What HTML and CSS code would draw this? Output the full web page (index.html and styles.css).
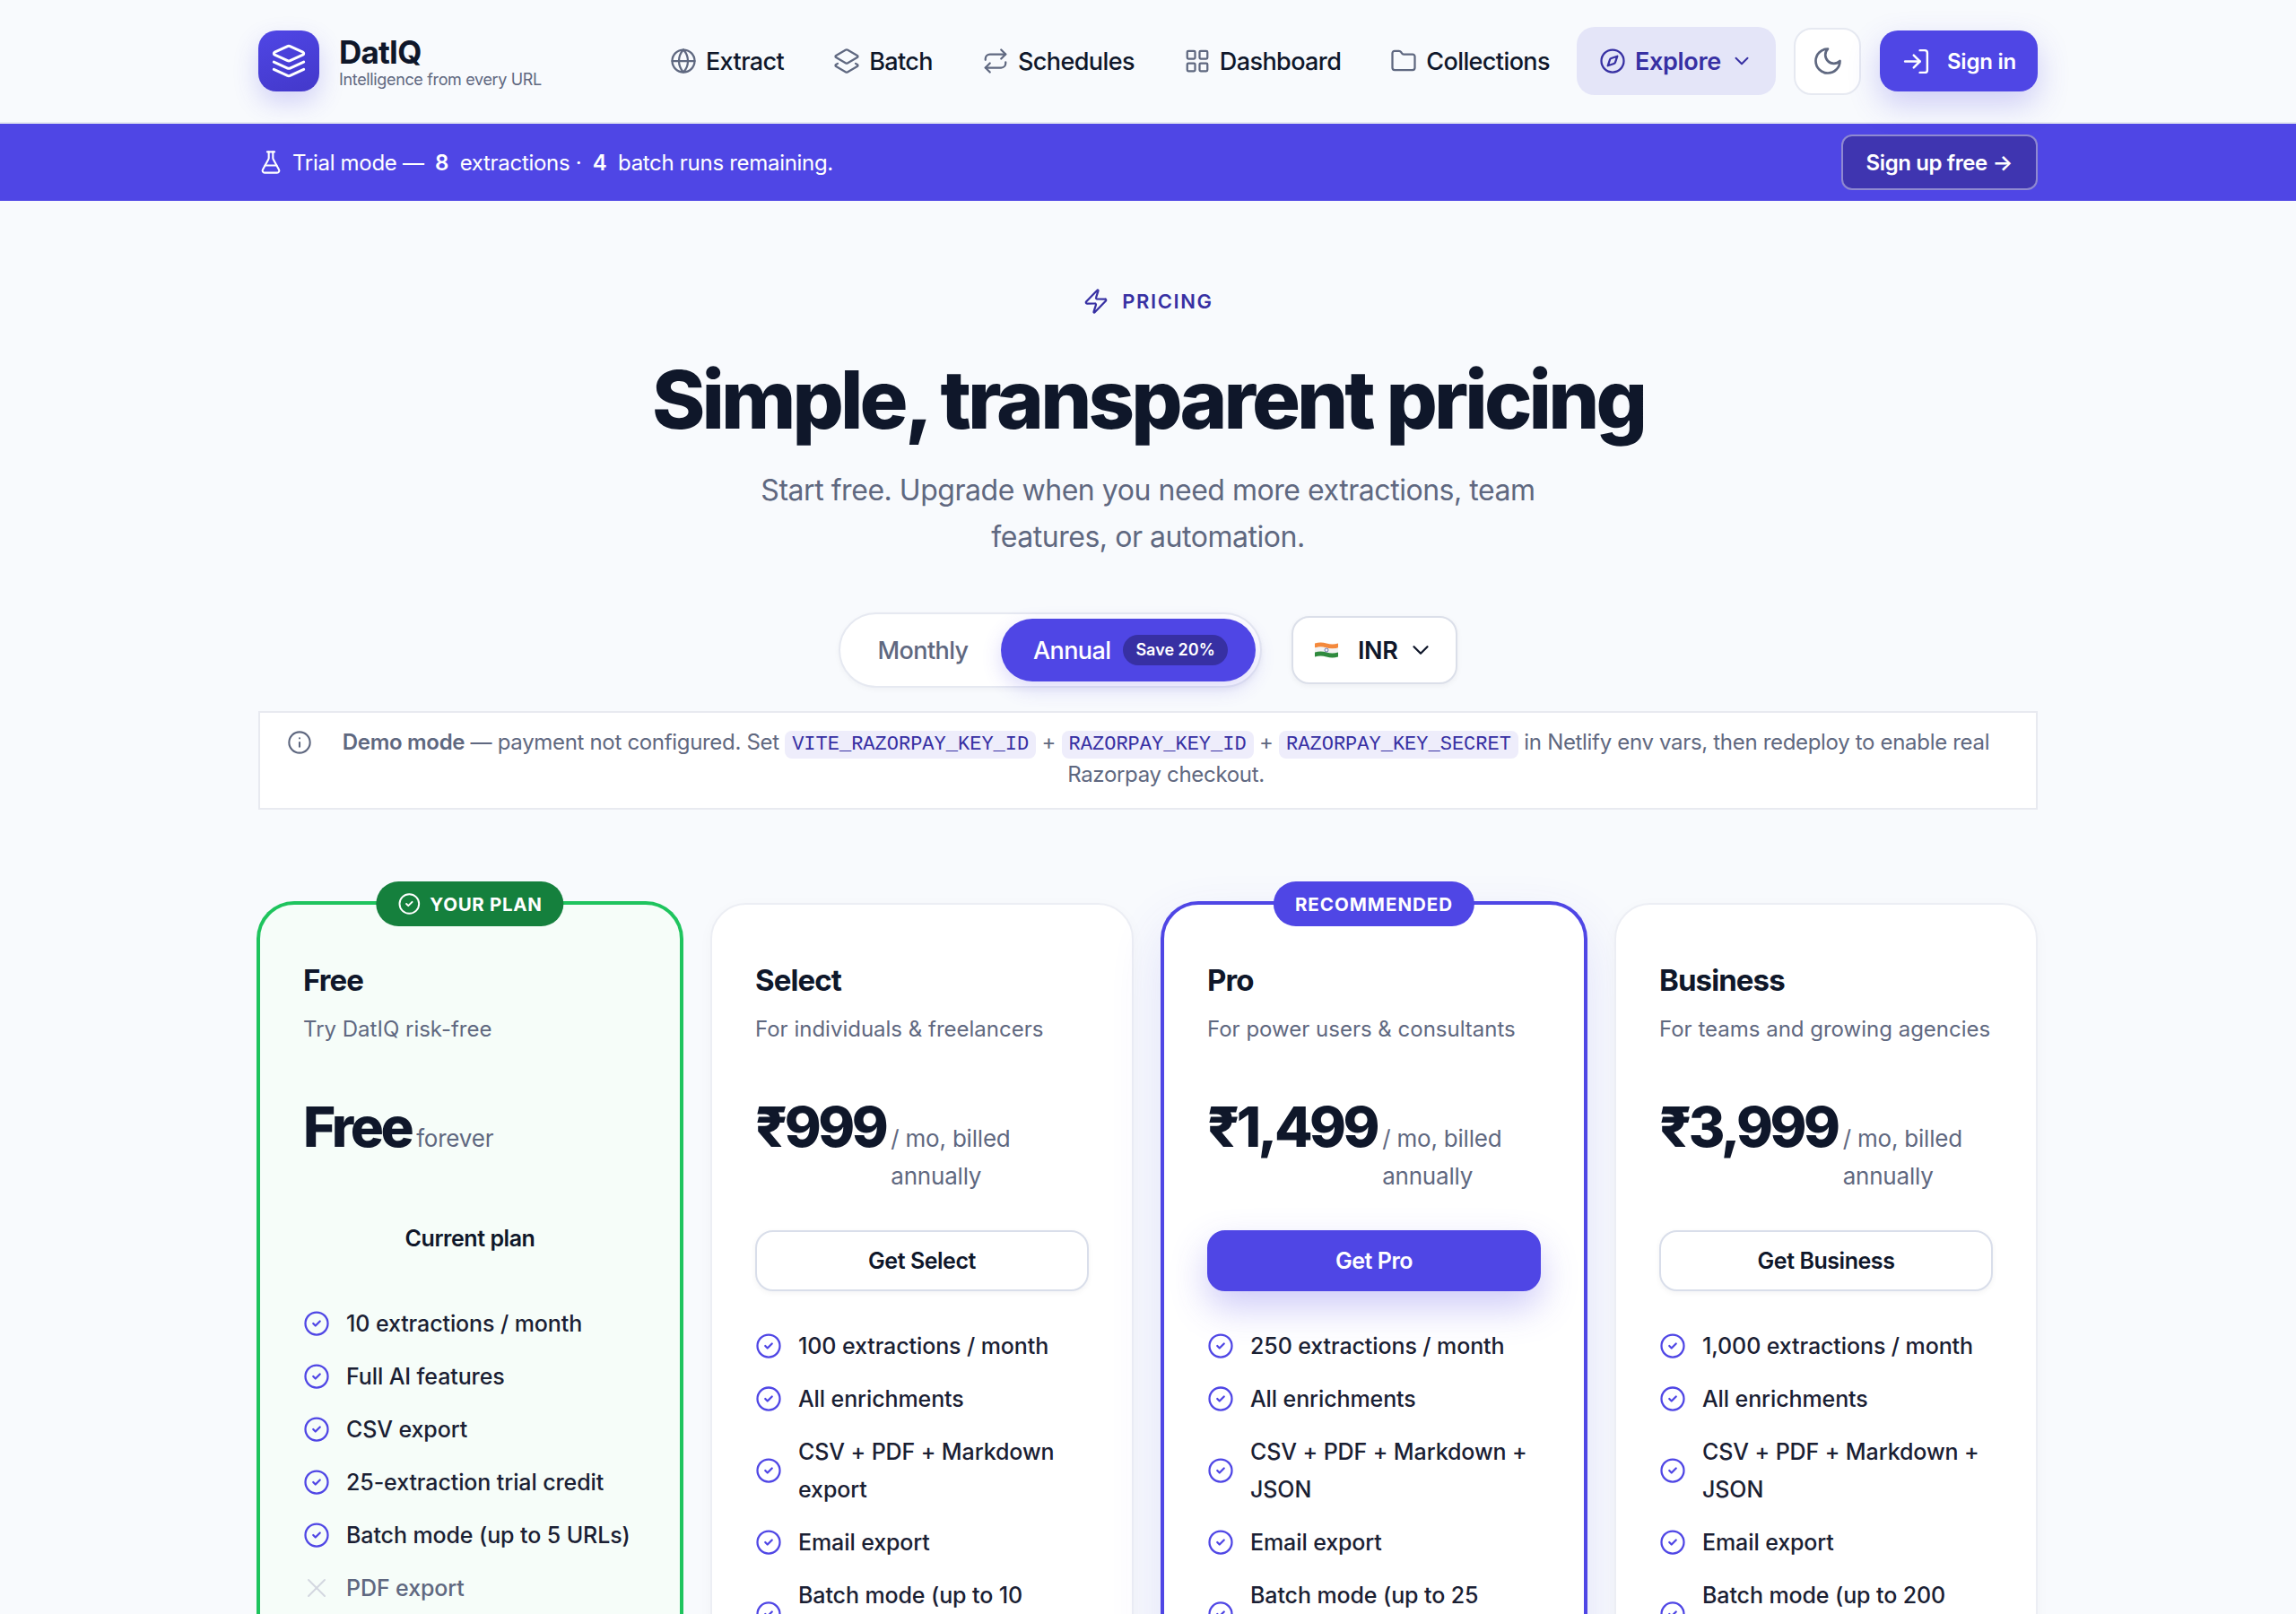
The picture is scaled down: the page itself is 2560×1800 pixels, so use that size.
FILE: index.html
```html
<!DOCTYPE html>
<html>
	<head>
		<meta charset="utf-8">
		<title>DatIQ - Pricing</title>
		<link rel="stylesheet" href="styles.css">
	</head>
	<body>
		<svg class="sprite">
			<symbol id="i-globe" viewBox="0 0 24 24"><circle cx="12" cy="12" r="10"/><path d="M12 2a14.5 14.5 0 0 0 0 20 14.5 14.5 0 0 0 0-20"/><path d="M2 12h20"/></symbol>
			<symbol id="i-layers" viewBox="0 0 24 24"><path d="M13 13.74a2 2 0 0 1-2 0L2.5 8.87a1 1 0 0 1 0-1.74L11 2.26a2 2 0 0 1 2 0l8.5 4.87a1 1 0 0 1 0 1.74z"/><path d="m20 14.285 1.5.845a1 1 0 0 1 0 1.74L13 21.74a2 2 0 0 1-2 0l-8.5-4.87a1 1 0 0 1 0-1.74l1.5-.845"/></symbol>
			<symbol id="i-repeat" viewBox="0 0 24 24"><path d="m17 2 4 4-4 4"/><path d="M3 11v-1a4 4 0 0 1 4-4h14"/><path d="m7 22-4-4 4-4"/><path d="M21 13v1a4 4 0 0 1-4 4H3"/></symbol>
			<symbol id="i-grid" viewBox="0 0 24 24"><rect x="3" y="3" width="7" height="7" rx="1"/><rect x="14" y="3" width="7" height="7" rx="1"/><rect x="14" y="14" width="7" height="7" rx="1"/><rect x="3" y="14" width="7" height="7" rx="1"/></symbol>
			<symbol id="i-folder" viewBox="0 0 24 24"><path d="M20 20a2 2 0 0 0 2-2V8a2 2 0 0 0-2-2h-7.9a2 2 0 0 1-1.69-.9L9.6 3.9A2 2 0 0 0 7.93 3H4a2 2 0 0 0-2 2v13a2 2 0 0 0 2 2Z"/></symbol>
			<symbol id="i-compass" viewBox="0 0 24 24"><circle cx="12" cy="12" r="10"/><path d="m16.24 7.76-1.804 5.411a2 2 0 0 1-1.265 1.265L7.76 16.24l1.804-5.411a2 2 0 0 1 1.265-1.265z"/></symbol>
			<symbol id="i-chevron" viewBox="0 0 24 24"><path d="m6 9 6 6 6-6"/></symbol>
			<symbol id="i-moon" viewBox="0 0 24 24"><path d="M12 3a6 6 0 0 0 9 9 9 9 0 1 1-9-9Z"/></symbol>
			<symbol id="i-login" viewBox="0 0 24 24"><path d="M15 3h4a2 2 0 0 1 2 2v14a2 2 0 0 1-2 2h-4"/><path d="m10 17 5-5-5-5"/><path d="M15 12H3"/></symbol>
			<symbol id="i-flask" viewBox="0 0 24 24"><path d="M14 2v6a2 2 0 0 0 .245.96l5.51 10.08A2 2 0 0 1 18 22H6a2 2 0 0 1-1.755-2.96l5.51-10.08A2 2 0 0 0 10 8V2"/><path d="M6.453 15h11.094"/><path d="M8.5 2h7"/></symbol>
			<symbol id="i-zap" viewBox="0 0 24 24"><path d="M4 14a1 1 0 0 1-.78-1.63l9.9-10.2a.5.5 0 0 1 .86.46l-1.92 6.02A1 1 0 0 0 13 10h7a1 1 0 0 1 .78 1.63l-9.9 10.2a.5.5 0 0 1-.86-.46l1.92-6.02A1 1 0 0 0 11 14z"/></symbol>
			<symbol id="i-info" viewBox="0 0 24 24"><circle cx="12" cy="12" r="10"/><path d="M12 16v-4"/><path d="M12 8h.01"/></symbol>
			<symbol id="i-check" viewBox="0 0 24 24"><circle cx="12" cy="12" r="10"/><path d="m9 12 2 2 4-4"/></symbol>
			<symbol id="i-x" viewBox="0 0 24 24"><path d="M18 6 6 18"/><path d="m6 6 12 12"/></symbol>
			<symbol id="i-stack" viewBox="0 0 24 24"><path d="M12.83 2.18a2 2 0 0 0-1.66 0L2.6 6.08a1 1 0 0 0 0 1.83l8.58 3.91a2 2 0 0 0 1.66 0l8.58-3.9a1 1 0 0 0 0-1.83Z"/><path d="m22 17.65-9.17 4.16a2 2 0 0 1-1.66 0L2 17.65"/><path d="m22 12.65-9.17 4.16a2 2 0 0 1-1.66 0L2 12.65"/></symbol>
		</svg>

		<header class="topbar">
			<div class="wrap topbar-in">
				<a class="brand" href="#">
					<span class="brand-logo"><svg class="ic"><use href="#i-stack"/></svg></span>
					<span class="brand-text">
						<span class="brand-name">DatIQ</span>
						<span class="brand-sub">Intelligence from every URL</span>
					</span>
				</a>
				<nav class="nav">
					<a class="nav-link" href="#"><svg class="ic"><use href="#i-globe"/></svg>Extract</a>
					<a class="nav-link" href="#"><svg class="ic"><use href="#i-layers"/></svg>Batch</a>
					<a class="nav-link" href="#"><svg class="ic"><use href="#i-repeat"/></svg>Schedules</a>
					<a class="nav-link" href="#"><svg class="ic"><use href="#i-grid"/></svg>Dashboard</a>
					<a class="nav-link" href="#"><svg class="ic"><use href="#i-folder"/></svg>Collections</a>
					<a class="nav-explore" href="#"><svg class="ic"><use href="#i-compass"/></svg>Explore<svg class="ic ic-small"><use href="#i-chevron"/></svg></a>
				</nav>
				<a class="theme-btn" href="#"><svg class="ic"><use href="#i-moon"/></svg></a>
				<a class="signin-btn" href="#"><svg class="ic"><use href="#i-login"/></svg>Sign in</a>
			</div>
		</header>

		<div class="trial">
			<div class="wrap trial-in">
				<svg class="ic"><use href="#i-flask"/></svg>
				<span class="trial-text">Trial mode — <b>8</b> extractions · <b>4</b> batch runs remaining.</span>
				<a class="trial-btn" href="#">Sign up free →</a>
			</div>
		</div>

		<main class="wrap">
			<section class="hero">
				<div class="eyebrow"><svg class="ic"><use href="#i-zap"/></svg>PRICING</div>
				<h1>Simple, transparent pricing</h1>
				<p class="lead">Start free. Upgrade when you need more extractions, team features, or automation.</p>
				<div class="controls">
					<div class="toggle">
						<span class="toggle-opt">Monthly</span>
						<span class="toggle-opt active">Annual<span class="save">Save 20%</span></span>
					</div>
					<div class="currency">
						<svg class="flag" viewBox="0 0 26 18">
							<path d="M0 1.5q6.5-2 13 0t13 0v5q-6.500 2-13 0t-13 0z" fill="#f4893c"/>
							<path d="M0 6.500q6.500-2 13 0t13 0v5q-6.500 2-13 0t-13 0z" fill="#f3f3f3"/>
							<path d="M0 11.500q6.500-2 13 0t13 0v5q-6.500 2-13 0t-13 0z" fill="#2f8a3e"/>
							<circle cx="13" cy="9" r="2" fill="none" stroke="#3b4a9a" stroke-width=".7"/>
						</svg>
						<span>INR</span>
						<svg class="ic ic-small"><use href="#i-chevron"/></svg>
					</div>
				</div>
			</section>

			<div class="demo">
				<svg class="ic"><use href="#i-info"/></svg>
				<p><b>Demo mode</b> — payment not configured. Set <code>VITE_RAZORPAY_KEY_ID</code> + <code>RAZORPAY_KEY_ID</code> + <code>RAZORPAY_KEY_SECRET</code> in Netlify env vars, then redeploy to enable real Razorpay checkout.</p>
			</div>

			<section class="plans">
				<article class="plan plan-current">
					<span class="ribbon ribbon-green"><svg class="ic"><use href="#i-check"/></svg>YOUR PLAN</span>
					<h3>Free</h3>
					<p class="plan-desc">Try DatIQ risk-free</p>
					<div class="price"><strong>Free</strong><span>forever</span></div>
					<div class="plan-btn plan-btn-plain">Current plan</div>
					<ul class="feats">
						<li><svg class="ic"><use href="#i-check"/></svg>10 extractions / month</li>
						<li><svg class="ic"><use href="#i-check"/></svg>Full AI features</li>
						<li><svg class="ic"><use href="#i-check"/></svg>CSV export</li>
						<li><svg class="ic"><use href="#i-check"/></svg>25-extraction trial credit</li>
						<li><svg class="ic"><use href="#i-check"/></svg>Batch mode (up to 5 URLs)</li>
						<li class="off"><svg class="ic"><use href="#i-x"/></svg>PDF export</li>
					</ul>
				</article>

				<article class="plan">
					<h3>Select</h3>
					<p class="plan-desc">For individuals &amp; freelancers</p>
					<div class="price"><strong>₹999</strong><span>/ mo, billed annually</span></div>
					<a class="plan-btn" href="#">Get Select</a>
					<ul class="feats">
						<li><svg class="ic"><use href="#i-check"/></svg>100 extractions / month</li>
						<li><svg class="ic"><use href="#i-check"/></svg>All enrichments</li>
						<li><svg class="ic"><use href="#i-check"/></svg>CSV + PDF + Markdown export</li>
						<li><svg class="ic"><use href="#i-check"/></svg>Email export</li>
						<li><svg class="ic"><use href="#i-check"/></svg>Batch mode (up to 10 URLs)</li>
					</ul>
				</article>

				<article class="plan plan-best">
					<span class="ribbon">RECOMMENDED</span>
					<h3>Pro</h3>
					<p class="plan-desc">For power users &amp; consultants</p>
					<div class="price"><strong>₹1,499</strong><span>/ mo, billed annually</span></div>
					<a class="plan-btn plan-btn-primary" href="#">Get Pro</a>
					<ul class="feats">
						<li><svg class="ic"><use href="#i-check"/></svg>250 extractions / month</li>
						<li><svg class="ic"><use href="#i-check"/></svg>All enrichments</li>
						<li><svg class="ic"><use href="#i-check"/></svg>CSV + PDF + Markdown + JSON</li>
						<li><svg class="ic"><use href="#i-check"/></svg>Email export</li>
						<li><svg class="ic"><use href="#i-check"/></svg>Batch mode (up to 25 URLs)</li>
					</ul>
				</article>

				<article class="plan">
					<h3>Business</h3>
					<p class="plan-desc">For teams and growing agencies</p>
					<div class="price"><strong>₹3,999</strong><span>/ mo, billed annually</span></div>
					<a class="plan-btn" href="#">Get Business</a>
					<ul class="feats">
						<li><svg class="ic"><use href="#i-check"/></svg>1,000 extractions / month</li>
						<li><svg class="ic"><use href="#i-check"/></svg>All enrichments</li>
						<li><svg class="ic"><use href="#i-check"/></svg>CSV + PDF + Markdown + JSON</li>
						<li><svg class="ic"><use href="#i-check"/></svg>Email export</li>
						<li><svg class="ic"><use href="#i-check"/></svg>Batch mode (up to 200 URLs)</li>
					</ul>
				</article>
			</section>
		</main>
	</body>
</html>
```

FILE: styles.css
```css
*{margin:0;padding:0;box-sizing:border-box;}
html,body{height:100vh;overflow:hidden;}
body{background:#f8fafd;color:#0f172a;font-family:"Inter","Liberation Sans",sans-serif;}
a{text-decoration:none;color:inherit;}
ul{list-style:none;}

.sprite{display:none;}
.ic{width:30px;height:30px;fill:none;stroke:currentColor;stroke-width:1.8;stroke-linecap:round;stroke-linejoin:round;flex:none;}
.ic-small{width:26px;height:26px;}
.wrap{width:1984px;margin:0 auto;}

/* header */
.topbar{height:138px;border-bottom:2px solid #e6e9f1;}
.topbar-in{height:136px;display:flex;align-items:center;}
.brand{display:flex;align-items:center;gap:22px;}
.brand-logo{width:68px;height:68px;border-radius:20px;background:linear-gradient(160deg,#4f46e5,#4338ca);color:#fff;display:flex;align-items:center;justify-content:center;box-shadow:0 12px 28px rgba(79,70,229,.22);}
.brand-logo .ic{width:40px;height:40px;}
.brand-text{display:flex;flex-direction:column;padding-top:4px;}
.brand-name{font-size:35px;line-height:38px;font-weight:700;letter-spacing:-.8px;}
.brand-sub{font-size:18px;line-height:24px;letter-spacing:-.35px;color:#5f6880;}
.nav{margin-left:auto;display:flex;align-items:center;gap:5px;}
.nav-link{display:flex;align-items:center;gap:10px;padding:0 25px;height:76px;font-size:27px;font-weight:500;letter-spacing:-.6px;color:#0f172a;}
.nav-link .ic{color:#5f6880;}
.nav-explore{display:flex;align-items:center;gap:10px;height:76px;padding:0 25px;border-radius:20px;background:#e4e5f8;color:#3730a3;font-size:27px;font-weight:600;letter-spacing:-.3px;}
.theme-btn{margin-left:20px;width:75px;height:75px;border-radius:20px;background:#fff;border:2px solid #e6e9f1;display:flex;align-items:center;justify-content:center;color:#5f6880;}
.theme-btn .ic{width:36px;height:36px;}
.signin-btn{margin-left:21px;width:176px;height:68px;border-radius:20px;background:#4f46e5;color:#fff;display:flex;align-items:center;justify-content:center;gap:18px;font-size:24px;font-weight:600;letter-spacing:-.2px;box-shadow:0 14px 34px rgba(79,70,229,.25);}
.signin-btn .ic{width:33px;height:33px;}

/* trial banner */
.trial{height:86px;background:#4f46e5;color:#fff;}
.trial-in{height:86px;display:flex;align-items:center;gap:10px;}
.trial-in .ic{width:28px;height:28px;}
.trial-text{font-size:24px;letter-spacing:-.3px;}
.trial-text b{font-weight:600;margin:0 6px;}
.trial-btn{margin-left:auto;height:62px;padding:0 26px;display:flex;align-items:center;background:#3f35b0;border:2px solid rgba(255,255,255,.42);border-radius:12px;font-size:24px;font-weight:600;letter-spacing:-.4px;}

/* hero */
.hero{text-align:center;padding-top:96px;}
.eyebrow{display:flex;align-items:center;justify-content:center;gap:14px;height:32px;font-size:22px;font-weight:600;letter-spacing:1.6px;color:#3730a3;}
h1{margin-top:38px;font-size:90px;line-height:112px;font-weight:800;letter-spacing:-3.9px;}
.lead{width:900px;margin:19px auto 0;font-size:32px;line-height:52px;letter-spacing:-.46px;color:#5f6880;}
.controls{margin-top:58px;display:flex;justify-content:center;align-items:center;gap:33px;}
.toggle{width:472px;height:84px;padding:5px;border:2px solid #e6e9f1;border-radius:42px;background:#fff;display:flex;align-items:center;box-shadow:0 2px 6px rgba(15,23,42,.04);}
.toggle-opt{flex:1;font-size:27px;font-weight:500;color:#5f6880;letter-spacing:-.6px;}
.toggle-opt.active{flex:none;width:284px;height:70px;padding-left:36px;border-radius:35px;background:#4f46e5;color:#fff;display:flex;align-items:center;gap:14px;box-shadow:0 8px 22px rgba(79,70,229,.2);}
.save{height:34px;padding:0 14px;border-radius:17px;background:#3730a3;font-size:18px;font-weight:600;line-height:34px;letter-spacing:0;}
.currency{width:185px;height:76px;padding-left:24px;border:2px solid #dbdfe9;border-radius:20px;background:#fff;display:flex;align-items:center;font-size:27px;font-weight:600;letter-spacing:-.4px;box-shadow:0 2px 6px rgba(15,23,42,.05);}
.flag{width:26px;height:18px;margin-right:22px;}
.currency .ic{width:30px;height:30px;margin-left:11px;}

/* demo note */
.demo{margin-top:26px;padding:15px 30px 19px;background:#fff;border:2px solid #e8eaf0;display:flex;gap:12px;color:#5f6880;}
.demo .ic{width:28px;height:28px;margin-top:4px;}
.demo p{flex:1;text-align:center;font-size:24px;line-height:36px;letter-spacing:-.32px;}
.demo b{font-weight:600;}
.demo code{display:inline-block;height:31px;line-height:31px;padding:0 8px;background:#eeedfb;border-radius:8px;color:#3730a3;font-family:"Liberation Mono",monospace;font-size:22px;letter-spacing:0;}

/* plans */
.plans{margin-top:104px;display:grid;grid-template-columns:repeat(4,1fr);gap:32px;align-items:start;}
.plan{position:relative;height:1200px;padding:61px 48px 48px;background:#fff;border:2px solid #eceef4;border-radius:40px;box-shadow:0 4px 16px rgba(15,23,42,.03);}
.plan-current{background:#f6fdf9;border-color:#1fc45e;box-shadow:0 0 0 2px #1fc45e;}
.plan-best{border-color:#4f46e5;box-shadow:0 0 0 2px #4f46e5,0 24px 60px rgba(79,70,229,.14);}
.ribbon{position:absolute;top:-26px;left:50%;transform:translateX(-50%);height:50px;padding:0 24px;border-radius:25px;background:#4f46e5;color:#fff;display:flex;align-items:center;gap:10px;font-size:20.5px;font-weight:700;letter-spacing:1px;white-space:nowrap;}
.ribbon .ic{width:26px;height:26px;}
.ribbon-green{background:#15803d;letter-spacing:.7px;}
.plan h3{font-size:33px;line-height:46px;font-weight:700;letter-spacing:-.9px;}
.plan-desc{margin-top:14px;font-size:24px;line-height:36px;letter-spacing:0;color:#5f6880;}
.price{margin-top:40px;display:flex;align-items:baseline;gap:6px;}
.price strong{font-size:62px;line-height:102px;font-weight:800;letter-spacing:-3.5px;}
.price span{font-size:26px;line-height:42px;letter-spacing:-.2px;color:#5f6880;}
.plan-btn{display:flex;align-items:center;justify-content:center;height:68px;margin-top:39px;border:2px solid #d9deea;border-radius:20px;background:#fff;font-size:25px;font-weight:600;letter-spacing:-.45px;box-shadow:0 2px 6px rgba(15,23,42,.05);}
.plan-btn-plain{background:none;border:none;box-shadow:none;}
.plan-btn-primary{background:#4f46e5;border-color:#4f46e5;color:#fff;box-shadow:0 18px 40px rgba(79,70,229,.28);}
.feats{margin-top:40px;display:flex;flex-direction:column;gap:17px;}
.feats li{display:flex;align-items:center;gap:18px;font-size:25px;line-height:42px;font-weight:500;letter-spacing:-.1px;color:#1a2033;}
.feats .ic{color:#4f46e5;}
.feats .off{color:#5f6880;}
.feats .off .ic{width:36px;height:36px;margin:-3px;color:#d3d7e0;stroke-width:1.3;}
```
